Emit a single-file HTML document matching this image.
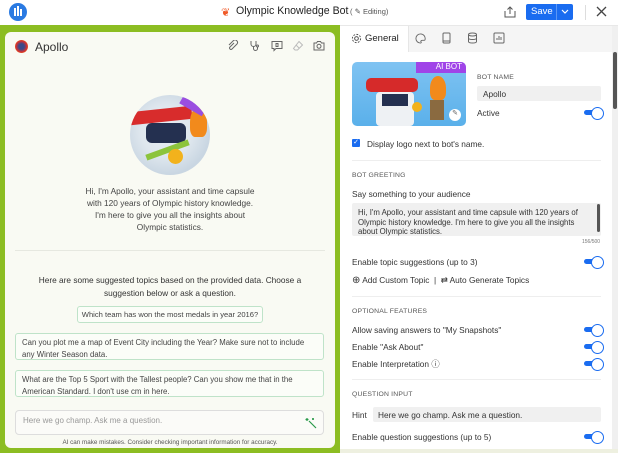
<!DOCTYPE html><html><head><style>
*{box-sizing:border-box;margin:0;padding:0}
body{width:618px;height:453px;overflow:hidden;background:#fff;font-family:"Liberation Sans",sans-serif;color:#333;position:relative}
.a{position:absolute}
.t{font-size:8.3px;color:#333;white-space:nowrap}
.cap{font-size:6.8px;color:#555;letter-spacing:.2px}
.tg{position:absolute;width:20px;height:11px}
.tg:before{content:"";position:absolute;left:0;top:3px;width:16px;height:5px;border-radius:3px;background:#1a6cf0}
.tg:after{content:"";position:absolute;right:0;top:0;width:11px;height:11px;border-radius:50%;background:#fff;border:1px solid #1a6cf0}
.chip{position:absolute;border:1px solid #bfe3c9;border-radius:3px;background:#fbfdf8;font-size:7.8px;color:#444;padding:3px 6px;line-height:11.5px}
.sep{position:absolute;left:352px;width:249px;height:1px;background:#eee}
svg.i{position:absolute;fill:none;stroke:#666;stroke-width:1}
</style></head><body>
<div class="a" style="left:9px;top:3px;width:18px;height:18px;border-radius:50%;background:#2a7ae2"></div>
<div class="a" style="left:14px;top:8px;width:2px;height:8px;background:#fff"></div><div class="a" style="left:17px;top:6px;width:2px;height:10px;background:#fff"></div><div class="a" style="left:20px;top:9px;width:2px;height:7px;background:#fff"></div>
<div class="a" style="left:221px;top:6px;color:#f05a28;font-size:11px">❦</div>
<div class="a" style="left:236px;top:5px;font-size:10.6px;color:#222;white-space:nowrap">Olympic Knowledge Bot</div>
<div class="a" style="left:350px;top:7px;font-size:7.5px;color:#555;white-space:nowrap">( ✎ Editing)</div>
<svg class="a" style="left:503px;top:5px" width="14" height="14" viewBox="0 0 14 14" fill="none" stroke="#555" stroke-width="1"><path d="M2 6v6h10V6M7 9V2M4.5 4.5L7 2l2.5 2.5"/></svg>
<div class="a" style="left:526px;top:4px;width:47px;height:16px;background:#1a6cf0;border-radius:2px"></div>
<div class="a" style="left:531px;top:6px;color:#fff;font-size:9.5px">Save</div>
<div class="a" style="left:556px;top:4px;width:1px;height:16px;background:#5b97f5"></div>
<svg class="a" style="left:561px;top:9px" width="8" height="6" viewBox="0 0 8 6" fill="none" stroke="#fff" stroke-width="1.2"><path d="M1 1l3 3 3-3"/></svg>
<div class="a" style="left:585px;top:5px;width:1px;height:15px;background:#ddd"></div>
<svg class="a" style="left:596px;top:6px" width="11" height="11" viewBox="0 0 11 11" stroke="#444" stroke-width="1.3"><path d="M1 1l9 9M10 1l-9 9"/></svg>
<div class="a" style="left:0;top:25px;width:618px;height:1px;background:#e8e8e8"></div>
<div class="a" style="left:0;top:25px;width:340px;height:428px;background:#8cbd22"></div>
<div class="a" style="left:5px;top:32px;width:330px;height:416px;background:#f9faf3;border-radius:6px"></div>
<div class="a" style="left:15px;top:40px;width:13px;height:13px;border-radius:50%;background:radial-gradient(circle,#3b4a8a 30%,#d83030 60%,#f5b400)"></div>
<div class="a" style="left:35px;top:40px;font-size:12px;color:#333">Apollo</div>
<svg class="i" style="left:227px;top:40px" width="12" height="12" viewBox="0 0 12 12"><path d="M7 3l-4 4a1.4 1.4 0 002 2l5-5a2.5 2.5 0 00-3.5-3.5L2 5"/></svg>
<svg class="i" style="left:249px;top:40px" width="12" height="12" viewBox="0 0 12 12"><path d="M2 1v3a2.5 2.5 0 005 0V1M4.5 6.5v2a2 2 0 004 0V7"/><circle cx="8.5" cy="6" r="1"/></svg>
<svg class="i" style="left:271px;top:40px" width="12" height="12" viewBox="0 0 12 12"><path d="M1 1.5h10v7H5l-2 2v-2H1z M5 3.5v3h2v-3z"/></svg>
<svg class="i" style="left:292px;top:40px;stroke:#bbb" width="12" height="12" viewBox="0 0 12 12"><path d="M7 1.5l3.5 3.5-5 5H3L1.5 8.5z M4 5l3.5 3.5"/></svg>
<svg class="i" style="left:313px;top:40px" width="12" height="12" viewBox="0 0 12 12"><path d="M1 3h2.5l1-1.5h3l1 1.5H11v7H1z"/><circle cx="6" cy="6.3" r="2"/></svg>
<div class="a" style="left:130px;top:95px;width:80px;height:80px;border-radius:50%;background:radial-gradient(circle at 45% 45%,#e8eef4 0,#dfe7ee 40%,#c9d6e2 70%);overflow:hidden">
<div class="a" style="left:0;top:14px;width:62px;height:13px;background:#d82c2c;transform:rotate(-6deg)"></div>
<div class="a" style="left:16px;top:28px;width:40px;height:20px;background:#243050;border-radius:6px"></div>
<div class="a" style="left:15px;top:52px;width:45px;height:6px;background:#8cc43c;transform:rotate(-20deg)"></div>
<div class="a" style="left:38px;top:54px;width:15px;height:15px;border-radius:50%;background:#f2b21c"></div>
<div class="a" style="left:60px;top:12px;width:17px;height:30px;background:#f28a1c;border-radius:50% 50% 30% 30%"></div>
<div class="a" style="left:52px;top:-2px;width:26px;height:18px;background:#9a4ee0;transform:rotate(30deg)"></div></div>
<div class="a" style="left:20px;top:185px;width:300px;text-align:center;font-size:8.3px;line-height:12px;color:#444">Hi, I'm Apollo, your assistant and time capsule<br>with 120 years of Olympic history knowledge.<br>I'm here to give you all the insights about<br>Olympic statistics.</div>
<div class="a" style="left:15px;top:250px;width:310px;height:1px;background:#e6e8e0"></div>
<div class="a" style="left:15px;top:274px;width:310px;text-align:center;font-size:8.3px;line-height:12.5px;color:#333">Here are some suggested topics based on the provided data. Choose a<br>suggestion below or ask a question.</div>
<div class="chip" style="left:77px;top:306px;width:186px;height:17px;padding:2px 0 0;text-align:center;white-space:nowrap;font-size:7.6px">Which team has won the most medals in year 2016?</div>
<div class="chip" style="left:15px;top:333px;width:309px;height:27px">Can you plot me a map of Event City including the Year? Make sure not to include any Winter Season data.</div>
<div class="chip" style="left:15px;top:370px;width:309px;height:27px">What are the Top 5 Sport with the Tallest people? Can you show me that in the American Standard. I don't use cm in here.</div>
<div class="a" style="left:15px;top:410px;width:309px;height:25px;border:1px solid #ddd;border-radius:4px;background:#fbfbf8"></div>
<div class="a" style="left:23px;top:416px;font-size:8px;color:#999">Here we go champ. Ask me a question.</div>
<svg class="a" style="left:305px;top:417px" width="12" height="12" viewBox="0 0 12 12" stroke="#2a9a4a" stroke-width="1.2"><path d="M4 4l7 7M2 1v3M0.5 2.5h3M8 1v2M7 2h2"/></svg>
<div class="a" style="left:0;top:439px;width:340px;text-align:center;font-size:6.3px;color:#555">AI can make mistakes. Consider checking important information for accuracy.</div>
<div class="a" style="left:340px;top:26px;width:278px;height:26px;background:#f5f5f5"></div>
<div class="a" style="left:340px;top:26px;width:68px;height:26px;background:#fff"></div>
<svg class="i" style="left:351px;top:33px;stroke:#444" width="11" height="11" viewBox="0 0 12 12"><circle cx="6" cy="6" r="2"/><circle cx="6" cy="6" r="4.5" stroke-dasharray="2 1.5"/></svg>
<div class="a" style="left:365px;top:33px;font-size:9.5px;color:#222">General</div>
<div class="a" style="left:408px;top:26px;width:1px;height:26px;background:#e6e6e6"></div>
<svg class="i" style="left:415px;top:33px" width="11" height="11" viewBox="0 0 12 12"><path d="M6 1a5 5 0 100 10c1 0 1-1 .5-1.5S6.5 8 8 8h2a1 1 0 001-1A5 5 0 006 1z"/></svg>
<svg class="i" style="left:441px;top:32px" width="11" height="12" viewBox="0 0 11 12"><rect x="2" y="1" width="7" height="10" rx="1"/><path d="M2 9h7"/></svg>
<svg class="i" style="left:467px;top:32px" width="11" height="12" viewBox="0 0 11 12"><ellipse cx="5.5" cy="2.5" rx="4" ry="1.5"/><path d="M1.5 2.5v7c0 2 8 2 8 0v-7M1.5 6c0 2 8 2 8 0"/></svg>
<svg class="i" style="left:493px;top:32px" width="12" height="12" viewBox="0 0 12 12"><rect x="1" y="1" width="10" height="10" rx="1"/><path d="M4 8V6M6 8V4M8 8V5"/></svg>
<div class="a" style="left:612px;top:26px;width:6px;height:427px;background:#f0f0f0"></div>
<div class="a" style="left:613px;top:52px;width:4px;height:57px;background:#555;border-radius:2px"></div>
<div class="a" style="left:352px;top:62px;width:114px;height:64px;border-radius:5px;background:linear-gradient(#7fc3f2,#5ab0ea);overflow:hidden">
<div class="a" style="left:64px;top:0;width:50px;height:11px;background:#a044e8;color:#fff;font-size:8px;text-align:right;padding-right:4px">AI BOT</div>
<div class="a" style="left:14px;top:16px;width:52px;height:14px;background:#d62a2a;border-radius:5px"></div>
<div class="a" style="left:24px;top:30px;width:38px;height:34px;background:#eef1f4;border-radius:4px"></div>
<div class="a" style="left:30px;top:32px;width:26px;height:12px;background:#243050"></div>
<div class="a" style="left:60px;top:40px;width:10px;height:10px;border-radius:50%;background:#f2b21c"></div>
<div class="a" style="left:78px;top:14px;width:16px;height:24px;background:#f28a1c;border-radius:50% 50% 30% 30%"></div>
<div class="a" style="left:78px;top:38px;width:14px;height:20px;background:#8a6a40"></div>
<div class="a" style="left:97px;top:47px;width:12px;height:12px;border-radius:50%;background:#fff;font-size:7px;text-align:center;color:#666">✎</div></div>
<div class="a cap" style="left:477px;top:74px">BOT NAME</div>
<div class="a" style="left:477px;top:86px;width:124px;height:15px;background:#f0f0f0;border-radius:2px"></div>
<div class="a t" style="left:483px;top:89px">Apollo</div>
<div class="a t" style="left:477px;top:108px">Active</div>
<div class="tg" style="left:584px;top:107px"></div>
<div class="a" style="left:352px;top:139px;width:8px;height:8px;background:#1a6cf0;border-radius:1px;color:#fff;font-size:7px;line-height:8px;text-align:center">✓</div>
<div class="a t" style="left:367px;top:139px">Display logo next to bot's name.</div>
<div class="sep" style="top:160px"></div>
<div class="a cap" style="left:352px;top:172px">BOT GREETING</div>
<div class="a t" style="left:352px;top:189px">Say something to your audience</div>
<div class="a" style="left:352px;top:203px;width:249px;height:33px;background:#f0f0f0;border-radius:2px"></div>
<div class="a" style="left:597px;top:204px;width:3px;height:28px;background:#555;border-radius:2px"></div>
<div class="a" style="left:358px;top:208px;font-size:7.8px;line-height:9.5px;color:#333;width:236px">Hi, I'm Apollo, your assistant and time capsule with 120 years of Olympic history knowledge. I'm here to give you all the insights about Olympic statistics.</div>
<div class="a" style="left:582px;top:239px;font-size:5px;color:#777">156/500</div>
<div class="a t" style="left:352px;top:257px">Enable topic suggestions (up to 3)</div>
<div class="tg" style="left:584px;top:256px"></div>
<div class="a t" style="left:352px;top:275px"><span style="font-size:10px">⊕</span> Add Custom Topic &nbsp;|&nbsp; ⇄ Auto Generate Topics</div>
<div class="sep" style="top:296px"></div>
<div class="a cap" style="left:352px;top:308px">OPTIONAL FEATURES</div>
<div class="a t" style="left:352px;top:325px">Allow saving answers to "My Snapshots"</div><div class="tg" style="left:584px;top:324px"></div>
<div class="a t" style="left:352px;top:342px">Enable "Ask About"</div><div class="tg" style="left:584px;top:341px"></div>
<div class="a t" style="left:352px;top:358px">Enable Interpretation ⓘ</div><div class="tg" style="left:584px;top:358px"></div>
<div class="sep" style="top:379px"></div>
<div class="a cap" style="left:352px;top:391px">QUESTION INPUT</div>
<div class="a t" style="left:352px;top:410px">Hint</div>
<div class="a" style="left:373px;top:407px;width:228px;height:15px;background:#f0f0f0;border-radius:2px"></div>
<div class="a t" style="left:378px;top:410px">Here we go champ. Ask me a question.</div>
<div class="a t" style="left:352px;top:432px">Enable question suggestions (up to 5)</div><div class="tg" style="left:584px;top:431px"></div>
<div class="a" style="left:340px;top:449px;width:278px;height:4px;background:#eef0e0"></div>
</body></html>
